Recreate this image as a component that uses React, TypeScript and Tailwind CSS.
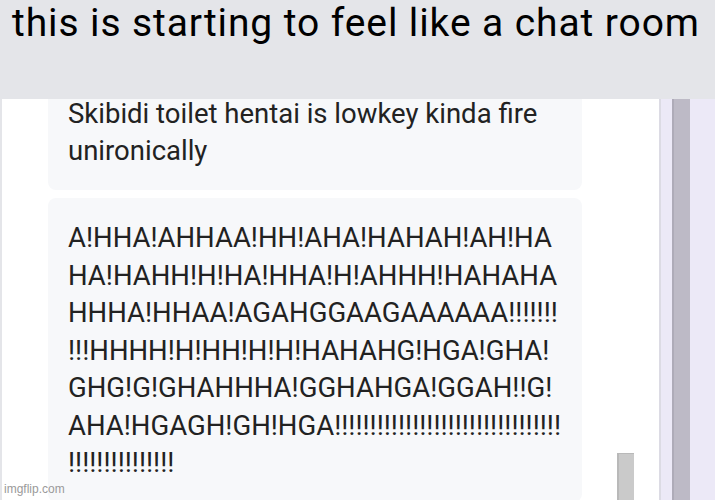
import React from "react";

const lines2 = [
  "A!HHA!AHHAA!HH!AHA!HAHAH!AH!HA",
  "HA!HAHH!H!HA!HHA!H!AHHH!HAHAHA",
  "HHHA!HHAA!AGAHGGAAGAAAAAA!!!!!!!",
  "!!!HHHH!H!HH!H!H!HAHAHG!HGA!GHA!",
  "GHG!G!GHAHHHA!GGHAHGA!GGAH!!G!",
  "AHA!HGAGH!GH!HGA!!!!!!!!!!!!!!!!!!!!!!!!!!!!!!!!",
  "!!!!!!!!!!!!!!!",
];

export default function App() {
  return (
    <div
      className="relative w-[715px] h-[500px] overflow-hidden bg-[#e4e5e9]"
      style={{ fontFamily: "Roboto, 'Liberation Sans', sans-serif" }}
    >
      <div className="h-[99px] bg-[#e4e5e9] pl-[12px] pt-[4px]">
        <div className="text-[39px] leading-none tracking-[0.9px] text-black whitespace-nowrap">
          this is starting to feel like a chat room
        </div>
      </div>
      <div className="flex h-[401px]">
        <div className="w-[2px] bg-[#e4e5e9]" />
        <div className="w-[657px] bg-white overflow-hidden">
          <div className="ml-[46px] w-[534px] mt-[-40px] flex flex-col gap-[8px]">
            <div className="rounded-[8px] bg-[#f7f8fa] pl-[20px] pr-[8px] pt-[40px] pb-[20px] text-[27.5px] text-[#222]">
              <div className="whitespace-nowrap leading-[30px]">Skibidi toilet hentai is lowkey kinda fire</div>
              <div className="mt-[2.5px] leading-[38.5px]">unironically</div>
            </div>
            <div className="rounded-[8px] bg-[#f7f8fa] pl-[20px] pr-[8px] pt-[21px] pb-[20px] text-[27.5px] leading-[37.5px] text-[#222]">
              {lines2.map((l, i) => (
                <div key={i} className="whitespace-nowrap">
                  {l}
                </div>
              ))}
            </div>
          </div>
        </div>
        <div className="w-[2px] bg-[#dcdbe4]" />
        <div className="w-[11px] bg-[#ece9f7]" />
        <div className="w-[18px] bg-[#bdbac6] border-l-[2px] border-[#aeabb8]" />
        <div className="flex-1 bg-[#ece9f7]" />
      </div>
      <div className="absolute left-[617px] top-[453px] w-[17px] h-[47px] bg-[#cacaca] border-l-[2px] border-t-[1px] border-[#b9b9b9]" />
      <div
        className="absolute left-[4px] top-[482px] text-[12px] leading-[14px] text-[#9a9a9a]"
        style={{ fontFamily: "'Liberation Sans', Arial, sans-serif" }}
      >
        imgflip.com
      </div>
    </div>
  );
}
